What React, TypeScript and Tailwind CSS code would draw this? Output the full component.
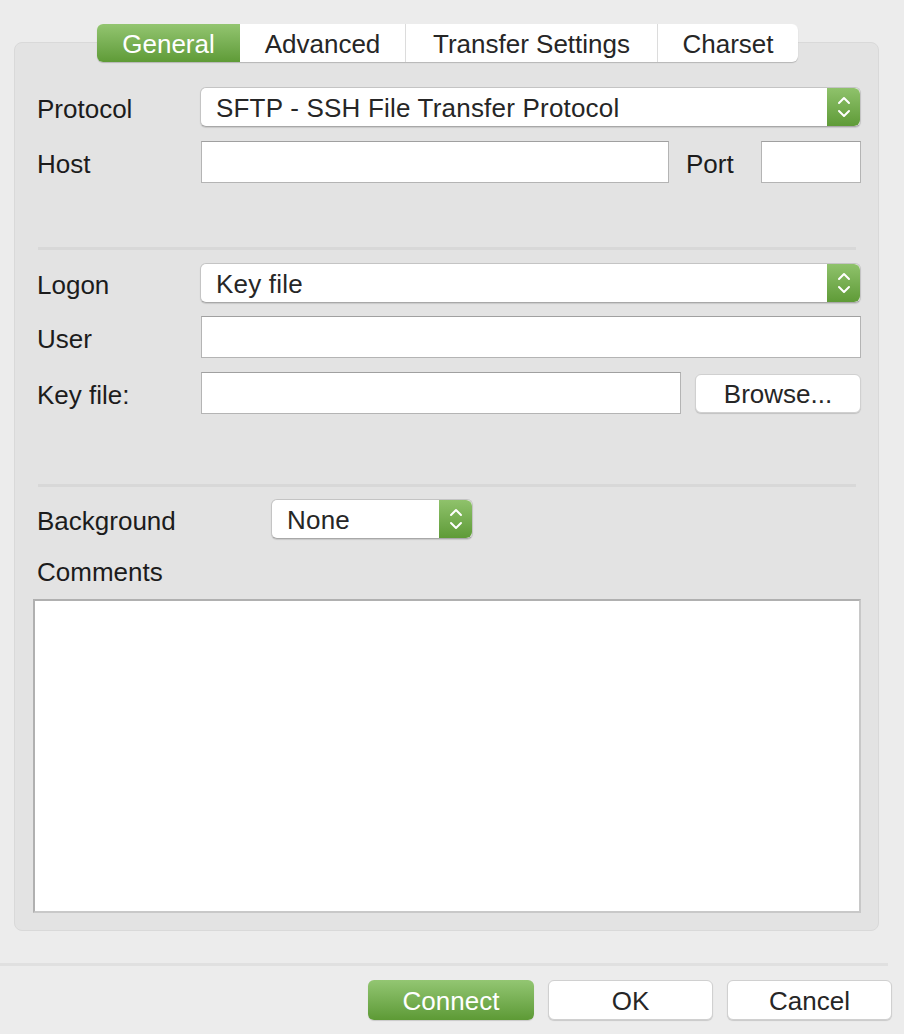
const font = { fontFamily: '"Liberation Sans", Arial, sans-serif' };

function Stepper() {
  return (
    <div className="flex h-full w-[33px] shrink-0 items-center justify-center rounded-r-[6px] bg-gradient-to-b from-[#8fc26b] to-[#5f9b37]">
      <svg width="16" height="28" viewBox="0 0 16 28" fill="none">
        <path d="M3 10 L8 5 L13 10" stroke="white" strokeWidth="2" strokeLinecap="round" strokeLinejoin="round" />
        <path d="M3 18 L8 23 L13 18" stroke="white" strokeWidth="2" strokeLinecap="round" strokeLinejoin="round" />
      </svg>
    </div>
  );
}

function Select({ value, className }: { value: string; className: string }) {
  return (
    <div
      className={`flex h-[40px] items-stretch rounded-[6px] border border-[#c4c4c4] border-b-[#a8a8a8] bg-white shadow-[0_1px_1px_rgba(0,0,0,0.12)] ${className}`}
    >
      <div className="flex flex-1 items-center pl-[15px] pt-[3px] text-[26px] tracking-[0.2px] text-[#262626]">{value}</div>
      <Stepper />
    </div>
  );
}

function Field({ className }: { className: string }) {
  return <div className={`h-[42px] border border-[#b4b4b4] border-t-[#a0a0a0] bg-white ${className}`} />;
}

function Label({ children, className = "w-[163px]" }: { children: string; className?: string }) {
  return <div className={`shrink-0 pt-[3px] text-[26px] leading-[32px] text-[#1c1c1c] ${className}`}>{children}</div>;
}

function Separator() {
  return <div className="ml-[23px] mr-[22px] h-[3px] bg-[#d8d8d8]" />;
}

function Button({ children, primary }: { children: string; primary?: boolean }) {
  return (
    <button
      className={`flex h-[40px] w-[165px] items-center justify-center rounded-[6px] pt-[3px] text-[26px] shadow-[0_1px_1px_rgba(0,0,0,0.15)] ${
        primary
          ? "w-[166px] bg-gradient-to-b from-[#93c672] to-[#5d9a35] text-white"
          : "border border-[#d0d0d0] bg-white text-[#262626]"
      }`}
    >
      {children}
    </button>
  );
}

const tabs = [
  { name: "General", w: "w-[143px]" },
  { name: "Advanced", w: "w-[165px]" },
  { name: "Transfer Settings", w: "w-[252px]" },
  { name: "Charset", w: "w-[141px]" },
];

export default function App() {
  return (
    <div className="relative h-[1034px] w-[904px] overflow-hidden bg-[#ececec]" style={font}>
      <div className="pt-[24px]">
        {/* Tab bar */}
        <div className="relative z-10 ml-[97px] flex h-[38px] w-[701px] overflow-hidden rounded-[6px] bg-white shadow-[0_1px_1px_rgba(0,0,0,0.2)]">
          {tabs.map((t, i) => (
            <div
              key={t.name}
              className={`flex items-center justify-center pt-[2px] text-[26px] ${t.w} ${
                i === 0
                  ? "bg-gradient-to-b from-[#93c570] to-[#5f9b37] text-white"
                  : "text-[#262626]"
              } ${i > 1 ? "border-l border-[#dcdcdc]" : ""}`}
            >
              {t.name}
            </div>
          ))}
        </div>

        {/* Panel */}
        <div className="-mt-[20px] ml-[14px] h-[889px] w-[865px] rounded-[8px] border border-[#d9d9d9] bg-[#e3e3e3] pt-[44px]">
          <div className="flex items-center pl-[22px] pr-[17px]">
            <Label>Protocol</Label>
            <Select value="SFTP - SSH File Transfer Protocol" className="flex-1" />
          </div>
          <div className="mt-[14px] flex items-center pl-[22px] pr-[17px]">
            <Label>Host</Label>
            <Field className="ml-[1px] w-[468px]" />
            <Label className="ml-[17px] w-[75px]">Port</Label>
            <Field className="flex-1" />
          </div>

          <div className="mt-[64px]">
            <Separator />
          </div>

          <div className="mt-[13px] flex items-center pl-[22px] pr-[17px]">
            <Label>Logon</Label>
            <Select value="Key file" className="flex-1" />
          </div>
          <div className="mt-[13px] flex items-center pl-[22px] pr-[17px]">
            <Label>User</Label>
            <Field className="ml-[1px] flex-1" />
          </div>
          <div className="mt-[14px] flex items-center pl-[22px] pr-[17px]">
            <Label>Key file:</Label>
            <Field className="ml-[1px] w-[480px]" />
            <button className="ml-[14px] flex h-[39px] flex-1 items-center justify-center rounded-[6px] border border-[#d0d0d0] bg-white pt-[3px] text-[26px] text-[#262626] shadow-[0_1px_1px_rgba(0,0,0,0.15)]">
              Browse...
            </button>
          </div>

          <div className="mt-[70px]">
            <Separator />
          </div>

          <div className="mt-[12px] flex items-center pl-[22px] pr-[17px]">
            <Label className="w-[234px]">Background</Label>
            <Select value="None" className="w-[202px]" />
          </div>
          <div className="mt-[14px] pl-[22px]">
            <Label>Comments</Label>
          </div>
          <div className="ml-[18px] mr-[17px] mt-[11px] h-[314px] border-2 border-[#b0b0b0] border-b-[#c8c8c8] border-r-[#c8c8c8] bg-white" />
        </div>

        {/* Footer */}
        <div className="mr-[16px] mt-[32px] h-[3px] bg-[#e0e0e0]" />
        <div className="mt-[14px] flex justify-end gap-[14px] pr-[12px]">
          <Button primary>Connect</Button>
          <Button>OK</Button>
          <Button>Cancel</Button>
        </div>
      </div>
    </div>
  );
}
